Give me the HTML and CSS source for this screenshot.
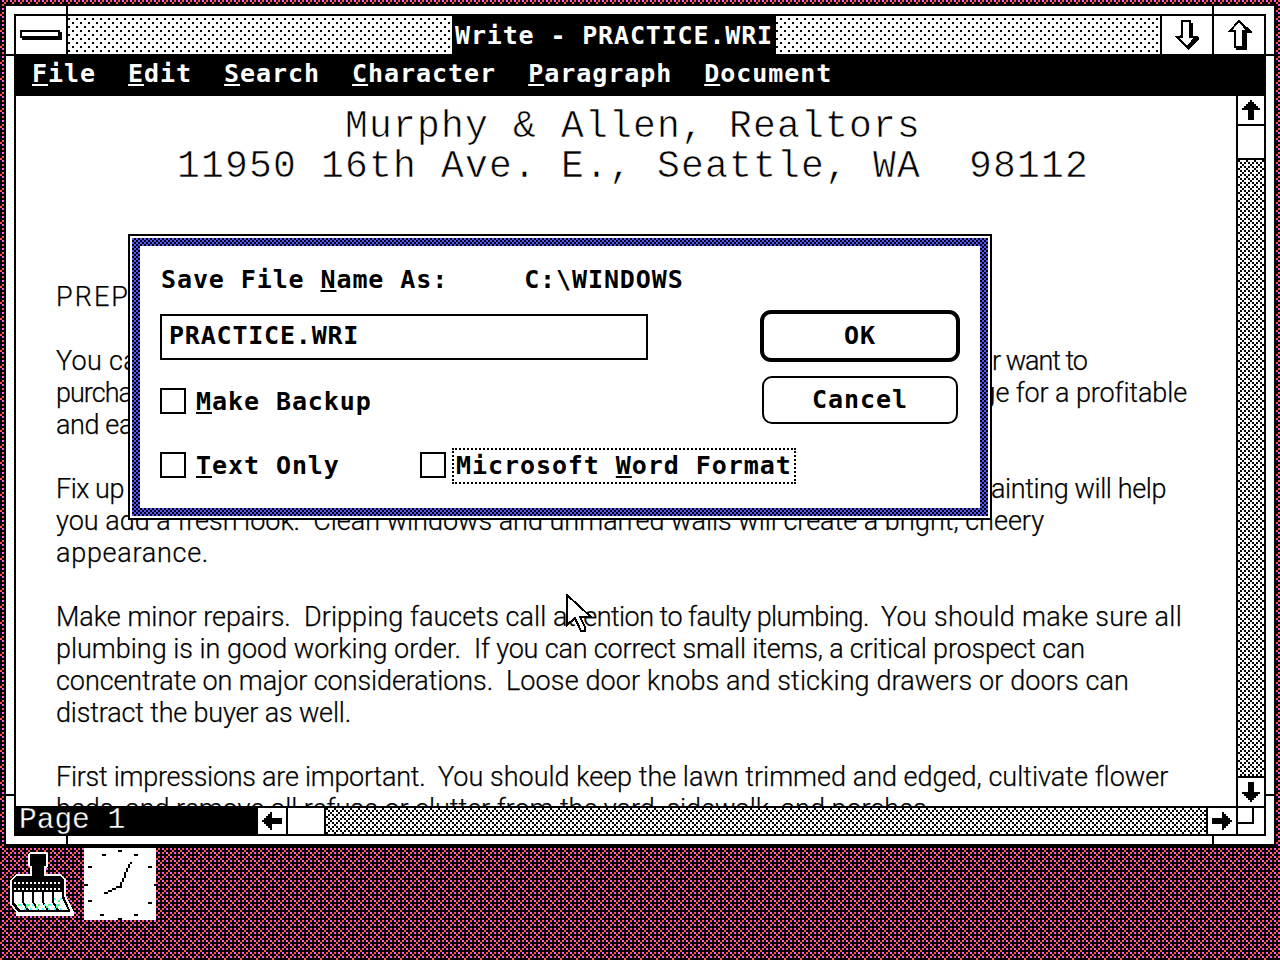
FILE: index.html
```html
<!DOCTYPE html>
<html lang="en">
<head>
<meta charset="utf-8">
<title>Write - PRACTICE.WRI</title>
<link rel="stylesheet" href="styles.css">
</head>
<body>
<svg class="defs" width="0" height="0" aria-hidden="true">
  <symbol id="arrow" viewBox="0 0 9 10"><path d="M4 0h1v1h1v1h1v1h1v1h1v1H6v5H3V5H0V4h1V3h1V2h1V1h1z"/></symbol>
</svg>
<div class="desktop">
  <div class="window">
    <i class="tick v t l"></i><i class="tick v t r"></i><i class="tick v b l"></i><i class="tick v b r"></i>
    <i class="tick h t l"></i><i class="tick h t r"></i><i class="tick h b l"></i><i class="tick h b r"></i>
    <div class="frame">
      <header class="titlebar">
        <div class="sysbox"><span class="sysbar"></span></div>
        <div class="caption"><h1>Write - PRACTICE.WRI</h1></div>
        <div class="sizer"><svg width="24" height="30" viewBox="0 0 24 30" shape-rendering="crispEdges"><path d="M9 3H18V17H24V19L13 30L4 20Z"/><path class="hollow" d="M7 1H15V17H21L12 27L2 17H7Z"/></svg></div>
        <div class="sizer up"><svg width="24" height="30" viewBox="0 0 24 30" shape-rendering="crispEdges"><path d="M13 2L24 11V13H19V30H8V13Z"/><path class="hollow" d="M11 1L20 11H15V27H7V11H2Z"/></svg></div>
      </header>
      <nav class="menu"><span><u>F</u>ile</span><span><u>E</u>dit</span><span><u>S</u>earch</span><span><u>C</u>haracter</span><span><u>P</u>aragraph</span><span><u>D</u>ocument</span></nav>
      <div class="middle">
        <main class="page">
          <div class="letterhead"><p>Murphy &amp; Allen, Realtors</p><p>11950 16th Ave. E., Seattle, WA&nbsp; 98112</p></div>
          <div class="body">
            <p><span data-w="74">PREP</span></p>
            <p></p>
            <p style="width:1031px"><span data-w="82">You ca</span><span data-w="95">r want to</span></p>
            <p style="width:1131px"><span data-w="76">purcha</span><span data-w="206">ge for a profitable</span></p>
            <p><span data-w="77">and ea</span></p>
            <p></p>
            <p style="width:1110px"><span data-w="68">Fix up</span><span data-w="175">ainting will help</span></p>
            <p><span data-w="988">you add a fresh look.&nbsp; Clean windows and unmarred walls will create a bright, cheery</span></p>
            <p><span data-w="153">appearance.</span></p>
            <p></p>
            <p><span data-w="248">Make minor repairs.&nbsp; </span><span data-w="249">Dripping faucets call </span><span data-w="328">attention to faulty plumbing.&nbsp; </span><span data-w="301">You should make sure all</span></p>
            <p><span data-w="418">plumbing is in good working order.&nbsp; </span><span data-w="611">If you can correct small items, a critical prospect can</span></p>
            <p><span data-w="450">concentrate on major considerations.&nbsp; </span><span data-w="623">Loose door knobs and sticking drawers or doors can</span></p>
            <p><span data-w="295">distract the buyer as well.</span></p>
            <p></p>
            <p><span data-w="382">First impressions are important.&nbsp; </span><span data-w="730">You should keep the lawn trimmed and edged, cultivate flower</span></p>
            <p><span data-w="877">beds, and remove all refuse or clutter from the yard, sidewalk, and porches.</span></p>
          </div>
        </main>
        <div class="vscroll">
          <div class="btn"><svg width="18" height="20" shape-rendering="crispEdges"><use href="#arrow"/></svg></div>
          <div class="thumb"></div>
          <div class="track"></div>
          <div class="btn"><svg class="down" width="18" height="20" shape-rendering="crispEdges"><use href="#arrow"/></svg></div>
        </div>
      </div>
      <footer class="bottom">
        <div class="pageno">Page 1</div>
        <div class="btn"><svg class="left" width="18" height="20" shape-rendering="crispEdges"><use href="#arrow"/></svg></div>
        <div class="thumb"></div>
        <div class="track"></div>
        <div class="btn"><svg class="right" width="18" height="20" shape-rendering="crispEdges"><use href="#arrow"/></svg></div>
        <div class="grow"><span></span></div>
      </footer>
    </div>
  </div>

  <section class="dialog">
    <div class="panel">
      <div class="fields">
        <div class="label"><span>Save File <u>N</u>ame As:</span><span>C:\WINDOWS</span></div>
        <div class="input">PRACTICE.WRI</div>
        <div class="checks one"><label><i></i><b><u>M</u>ake Backup</b></label></div>
        <div class="checks two"><label><i></i><b><u>T</u>ext Only</b></label><label class="focus"><i></i><b>Microsoft <u>W</u>ord Format</b></label></div>
      </div>
      <div class="buttons"><div class="button default">OK</div><div class="button">Cancel</div></div>
    </div>
  </section>

  <svg class="cursor" width="28" height="42" viewBox="0 0 14 21" shape-rendering="crispEdges"><path fill="#fff" stroke="#000" d="M.5.5V15.5L4.5 12L7.5 18.5H9.5V16.5L7 11.5H12.5Z"/></svg>

  <div class="icons">
    <svg width="64" height="64" viewBox="0 0 32 32" shape-rendering="crispEdges">
      <path fill="#fff" d="M10 0h8l1 1v6l-1 1v3h7l3 3v8l4 8v2H3v-2L0 26V14l3-3h7V8L9 7V1z"/>
      <path d="M10 1h8v6h-1v5h8l2 2v8l3 7v1H4l-3-4V14l2-2h8V7h-1z"/>
      <path stroke="#fff" stroke-dasharray="1 1" d="M2 15.500H26M2 18.500H26"/>
      <path fill="#fff" d="M2 20h24v3l3 6H5l-3-4z"/>
      <path fill="none" stroke="#000" d="M6.500 20v5l3 5M11.500 20v5l3 5M16.500 20v5l3 5M21.500 20v5l3 5"/>
      <path fill="none" stroke="#5ff" stroke-dasharray="1 2" d="M5 26.500H26M7 28.500H27M22 23.500H26"/>
      <path fill="none" stroke="#5f5" stroke-dasharray="1 4" d="M8 27.500H26M4 26.500H28M24 24.500h2"/>
    </svg>
    <svg width="72" height="72" viewBox="0 0 36 36" shape-rendering="crispEdges">
      <path fill="#fff" d="M0 0h36v36H0z"/>
      <path d="M17 1h2v1h-2zM9 3h2v1H9zM25 3h2v1h-2zM2 9h2v1H2zM32 9h2v1h-2zM0 18h2v1H0zM35 18h1v1h-1zM2 26h2v1H2zM32 27h2v1h-2zM8 33h2v1H8zM25 33h2v1h-2zM17 35h2v1h-2z"/>
      <path d="M23 7h1v1h-1zM22 8h1v2h-1zM21 10h1v2h-1zM20 12h1v3h-1zM19 15h1v2h-1zM18 17h1v3h-1zM16 19h2v1h-2zM14 20h2v1h-2zM12 21h2v1h-2zM10 22h2v1h-2z"/>
    </svg>
  </div>
</div>
<script src="fit.js"></script>
</body>
</html>
```
FILE: styles.css
```css
* { box-sizing: border-box; }
body { margin: 0; width: 1280px; height: 960px; overflow: hidden; background: #000; }
h1, p { margin: 0; font-weight: inherit; }
i { font-style: normal; }
.defs { position: absolute; }

.desktop {
  position: relative;
  width: 1280px;
  height: 960px;
  padding: 4px;
  background: #000 url("data:image/svg+xml,%3Csvg xmlns='http://www.w3.org/2000/svg' width='16' height='16' viewBox='0 0 8 8' shape-rendering='crispEdges'%3E%3Cpath fill='%23f5f' d='M1 0h1v1H1zM5 0h1v1H5zM3 2h1v1H3zM7 2h1v1H7zM1 4h1v1H1zM5 4h1v1H5zM3 6h1v1H3zM7 6h1v1H7z'/%3E%3Cpath fill='%23f55' d='M3 0h1v1H3zM7 0h1v1H7zM1 2h1v1H1zM5 2h1v1H5zM3 4h1v1H3zM7 4h1v1H7zM1 6h1v1H1zM5 6h1v1H5zM6 1h1v1H6zM2 1h1v1H2zM4 3h1v1H4zM2 5h1v1H2zM6 5h1v1H6zM0 7h1v1H0z'/%3E%3C/svg%3E");
}
.window {
  position: relative;
  width: 1272px;
  height: 844px;
  padding: 8px;
  background: #fff;
  border: 2px solid #000;
  border-bottom-width: 4px;
}
.tick { position: absolute; background: #000; }
.tick.v { width: 2px; height: 8px; }
.tick.h { width: 8px; height: 2px; }
.tick.v.t { top: 0; }
.tick.v.b { bottom: 0; }
.tick.v.l { left: 60px; }
.tick.v.r { left: 1206px; }
.tick.h.l { left: 0; }
.tick.h.r { right: 0; }
.tick.h.t { top: 48px; }
.tick.h.b { top: 788px; }

.frame { display: flex; flex-direction: column; height: 822px; border: 2px solid #000; }
.titlebar, .menu, .input, .label, .checks, .button {
  font: bold 25px/30px "DejaVu Sans Mono", monospace;
  letter-spacing: 0.95px;
  white-space: pre;
}
.titlebar { display: flex; height: 38px; }
.sysbox { display: flex; width: 52px; padding: 14px 0 0 4px; border-right: 2px solid #000; }
.sysbar { width: 40px; height: 8px; border: 2px solid #000; box-shadow: 2px 2px #000; }
.caption {
  display: flex;
  flex: 1;
  justify-content: center;
  background: #fff url("data:image/svg+xml,%3Csvg xmlns='http://www.w3.org/2000/svg' width='8' height='8'%3E%3Cpath d='M0 2h2v2H0zM4 6h2v2H4z'/%3E%3C/svg%3E");
}
.caption h1 { padding: 5px 0 0 3px; background: #000; color: #fff; font: inherit; letter-spacing: 0.85px; width: 324px; }
.sizer { display: flex; width: 52px; justify-content: center; padding-top: 4px; border-left: 2px solid #000; }
.sizer.up { padding-left: 2px; }
.hollow { fill: #fff; stroke: #000; stroke-width: 2; }

.menu { display: flex; gap: 32px; height: 42px; padding: 5px 16px; background: #000; color: #fff; }
u { text-decoration: underline; text-decoration-thickness: 2px; text-underline-offset: 2px; text-decoration-skip-ink: none; }

.middle { display: flex; height: 710px; background: #fff; }
.page { flex: 1; padding-top: 11px; overflow: hidden; }
.letterhead { width: 1234px; text-align: center; font: 38px/40px "Liberation Mono", monospace; letter-spacing: 1.2px; white-space: pre; -webkit-text-stroke: 0.6px #fff; }
.body { margin: 94px 0 0 40px; font: 300 27px/32px Roboto, "Liberation Sans", sans-serif; -webkit-text-stroke: 0.25px #000; }
.body p { display: flex; height: 32px; white-space: pre; }
.body p[style] { justify-content: space-between; }

.vscroll { display: flex; flex-direction: column; width: 28px; border-left: 2px solid #000; }
.btn { display: flex; align-items: center; justify-content: center; background: #fff; }
.vscroll .btn { height: 28px; }
.vscroll .thumb { height: 36px; border: solid #000; border-width: 2px 0; }
.track {
  flex: 1;
  background: #fff url("data:image/svg+xml,%3Csvg xmlns='http://www.w3.org/2000/svg' width='8' height='8' viewBox='0 0 4 4' shape-rendering='crispEdges'%3E%3Cpath d='M0 0h1v1H0zM1 1h1v1H1zM3 1h1v1H3zM2 2h1v1H2zM1 3h1v1H1zM3 3h1v1H3z'/%3E%3C/svg%3E");
}
.vscroll .track { border-bottom: 2px solid #000; }
.down { transform: rotate(180deg); }
.left { transform: rotate(-90deg); }
.right { transform: rotate(90deg); }

.bottom { display: flex; height: 28px; border-top: 2px solid #000; }
.pageno { width: 242px; height: 26px; padding-left: 3px; background: #000; color: #fff; font: 29.5px/25px "Liberation Mono", monospace; -webkit-text-stroke: 0.3px #000; }
.bottom .btn { width: 28px; }
.bottom .thumb { width: 40px; border: solid #000; border-width: 0 2px; background: #fff; }
.bottom .track { border-right: 2px solid #000; }
.grow { width: 28px; border-left: 2px solid #000; background: #fff; }
.grow span { display: block; width: 16px; height: 16px; border: solid #000; border-width: 0 2px 2px 0; }

.dialog {
  position: absolute;
  left: 128px;
  top: 234px;
  width: 864px;
  height: 286px;
  padding: 2px;
  border: 2px solid #000;
  background: url("data:image/svg+xml,%3Csvg xmlns='http://www.w3.org/2000/svg' width='4' height='4'%3E%3Cpath fill='%2355f' d='M0 0h4v4H0z'/%3E%3Cpath d='M2 0h2v2H2zM0 2h2v2H0z'/%3E%3C/svg%3E") content-box, #fff;
}
.panel { display: flex; margin: 8px; height: 262px; padding: 0 20px; background: #fff; justify-content: space-between; }
.fields { width: 600px; flex: none; }
.label { display: flex; gap: 76px; margin-top: 19px; padding-left: 1px; letter-spacing: 0.9px; }
.input { width: 488px; height: 46px; margin-top: 19px; padding: 5px 7px; border: 2px solid #000; letter-spacing: 0.8px; }
.checks { display: flex; letter-spacing: 0.93px; }
.checks label { display: flex; flex: none; align-items: center; height: 36px; }
.checks i { flex: none; width: 26px; height: 26px; border: 2px solid #000; margin: 0 6px 2px 0; }
.checks b { height: 36px; padding: 1px 0 0 2px; border: 2px solid transparent; }
.checks .focus b { border: 2px dotted #000; width: 344px; }
.one { margin-top: 24px; }
.two { margin-top: 28px; }
.two label:first-child { width: 260px; }
.buttons { display: flex; flex-direction: column; align-items: center; gap: 14px; padding-top: 64px; flex: none; }
.button { width: 196px; height: 48px; padding-top: 7px; border: 2px solid #000; border-radius: 10px; text-align: center; }
.button.default { width: 200px; height: 52px; border-width: 4px; border-radius: 11px; }

.cursor { position: absolute; left: 566px; top: 594px; }
.icons { display: flex; gap: 10px; padding-left: 6px; }
.icons svg:first-child { margin-top: 4px; }
```
FILE: fit.js
```js
// Spread each run of text to its stored width.
document.querySelectorAll('[data-w]').forEach(function (el) {
  var natural = el.getBoundingClientRect().width;
  el.style.letterSpacing = (el.dataset.w - natural) / el.textContent.length + 'px';
});
```
